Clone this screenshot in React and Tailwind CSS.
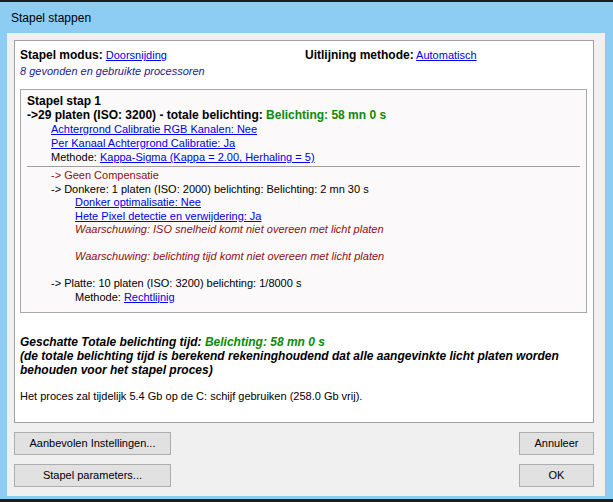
const Link = ({ children }) => (
  <span className="text-[#0000ee] underline">{children}</span>
);

const Btn = ({ children, w }) => (
  <button className={`${w} h-[23px] bg-[#e1e1e1] border border-[#adadad] text-[11px] text-black`}>
    {children}
  </button>
);

export default function App() {
  return (
    <div
      className="w-[613px] h-[502px] bg-[#1c1c1c] pt-[2px] overflow-hidden"
      style={{ fontFamily: '"Liberation Sans", Arial, sans-serif' }}
    >
      <div className="w-[613px] h-[497px] bg-[#8dcdf3] flex flex-col">
        {/* title bar */}
        <div className="h-[31px] flex items-center pl-[11px] text-[12px] text-black">Stapel stappen</div>

        {/* client area */}
        <div className="ml-[7px] mr-[8px] h-[463px] bg-[#f0f0f0] pt-[7px] pl-[7px] pr-[4px] flex flex-col">
          <div className="w-[580px] h-[383px] bg-white border border-[#a0a0a0] pt-[7px] pl-[5px] text-[11px] leading-[14px] text-black">
            <div className="flex">
              <div className="w-[285px]">
                <b className="text-[12px]">Stapel modus:</b> <Link>Doorsnijding</Link>
              </div>
              <div>
                <b className="text-[12px]">Uitlijning methode:</b> <Link>Automatisch</Link>
              </div>
            </div>
            <div className="italic text-[#1c1c8a] mt-[2px]">8 gevonden en gebruikte processoren</div>

            {/* stack step box */}
            <div className="mt-[11px] w-[567px] h-[224px] bg-[#fbf9fa] border border-[#a8a8a8] pt-[4px] pl-[6px] pr-[6px]">
              <div className="font-bold text-[12px]">Stapel stap 1</div>
              <div className="font-bold text-[12px]">
                -&gt;29 platen (ISO: 3200) - totale belichting: <span className="text-[#0b8a0b]">Belichting: 58 mn 0 s</span>
              </div>
              <div className="pl-[24px]">
                <div><Link>Achtergrond Calibratie RGB Kanalen: Nee</Link></div>
                <div><Link>Per Kanaal Achtergrond Calibratie: Ja</Link></div>
                <div>Methode: <Link>Kappa-Sigma (Kappa = 2.00, Herhaling = 5)</Link></div>
              </div>
              <div className="h-px bg-[#a0a0a0] mt-[2px] mb-[2px]"></div>
              <div className="pl-[24px] leading-[13.5px]">
                <div className="text-[#8b1111]">-&gt; Geen Compensatie</div>
                <div>-&gt; Donkere: 1 platen (ISO: 2000) belichting: Belichting: 2 mn 30 s</div>
                <div className="pl-[24px]">
                  <div><Link>Donker optimalisatie: Nee</Link></div>
                  <div><Link>Hete Pixel detectie en verwijdering: Ja</Link></div>
                  <div className="italic text-[#8b1111]">Waarschuwing: ISO snelheid komt niet overeen met licht platen</div>
                  <div className="h-[13.5px]"></div>
                  <div className="italic text-[#8b1111]">Waarschuwing: belichting tijd komt niet overeen met licht platen</div>
                  <div className="h-[13.5px]"></div>
                </div>
                <div>-&gt; Platte: 10 platen (ISO: 3200) belichting: 1/8000 s</div>
                <div className="pl-[24px]">
                  Methode: <Link>Rechtlijnig</Link>
                </div>
              </div>
            </div>

            <div className="mt-[22px] font-bold italic text-[12px]">
              <div>
                Geschatte Totale belichting tijd: <span className="text-[#0b8a0b]">Belichting: 58 mn 0 s</span>
              </div>
              <div>(de totale belichting tijd is berekend rekeninghoudend dat alle aangevinkte licht platen worden</div>
              <div>behouden voor het stapel proces)</div>
            </div>
            <div className="mt-[12px]">Het proces zal tijdelijk 5.4 Gb op de C: schijf gebruiken (258.0 Gb vrij).</div>
          </div>

          {/* buttons */}
          <div className="flex justify-between mt-[9px]">
            <div className="flex flex-col gap-[9px]">
              <Btn w="w-[157px]">Aanbevolen Instellingen...</Btn>
              <Btn w="w-[157px]">Stapel parameters...</Btn>
            </div>
            <div className="flex flex-col gap-[9px] mr-[7px]">
              <Btn w="w-[75px]">Annuleer</Btn>
              <Btn w="w-[75px]">OK</Btn>
            </div>
          </div>
        </div>
      </div>
    </div>
  );
}
